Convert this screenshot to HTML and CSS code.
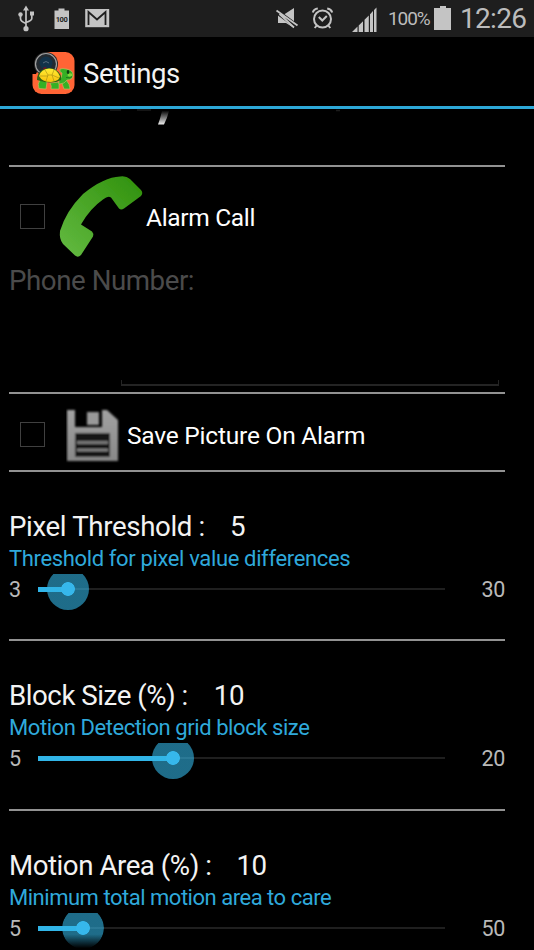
FILE: index.html
```html
<!DOCTYPE html>
<html lang="en">
<head>
<meta charset="utf-8">
<title>Settings</title>
<link rel="stylesheet" href="styles.css">
</head>
<body>
<div class="screen">
  <div class="status">
    <svg class="status-left" width="120" height="37" viewBox="0 0 120 37" fill="#c4c4c4">
      <g fill="none" stroke="#c4c4c4" stroke-width="1.7"><path d="M26 9v20M20.500 14v4.500q0 3 5.500 5M31.800 14v4.500q0 2-5.800 4"/></g>
      <path d="M26 5.500l3 5h-6zM30 11.500h4v4h-4z"/><circle cx="20.500" cy="14.500" r="2.200"/><circle cx="26" cy="28.700" r="2.600"/>
      <path d="M58.500 8.500h6v2H69V29H54.500V10.500h4z"/>
      <text x="55.700" y="22.300" class="batt-text" textLength="12">100</text>
      <path d="M85.200 9h24v18.200h-24z"/>
      <path d="M88.500 25V12l8.500 7.500 8.500-7.500V25" fill="none" stroke="#1e1e1e" stroke-width="1.800"/>
    </svg>
    <svg class="status-right" width="110" height="37" viewBox="0 0 110 37" fill="#c4c4c4">
      <path d="M8 14.500h6L24 8v20l-8-5H8z"/>
      <path d="M6 11L27 26.500" stroke="#1e1e1e" stroke-width="5"/>
      <path d="M6.500 10.500L27.500 25.500M9.500 14L24 27.500" fill="none" stroke="#c4c4c4" stroke-width="1.800"/>
      <g fill="none" stroke="#c4c4c4" stroke-width="2"><circle cx="52.500" cy="19" r="8.500"/><path d="M42.800 12.500q1-3.500 5-4M62.200 12.500q-1-3.500-5-4M46.700 25.500l-2 2.500M58.300 25.500l2 2.500M48.800 17l3.500 3.500 4.500-4.500"/></g>
      <path d="M82 32l5.500-5.500V32zM88.700 25.500l4.300-4.300V32h-4.300zM94.500 19.700l4.300-4.300V32h-4.300zM100 14.300l1.800-1.800V32H100zM101.500 12.500l1.500-1.500v21h-1.500zM104 10l2.500-2.500V32H104z"/>
    </svg>
    <span class="percent">100%</span>
    <svg class="battery" width="17" height="24" viewBox="0 0 17 24"><path d="M6 0h6v2h5v22H0V2h6z" fill="#c4c4c4"/></svg>
    <span class="clock">12:26</span>
  </div>
  <header class="bar">
    <svg class="logo" width="43" height="43" viewBox="0 0 43 43">
      <defs><linearGradient id="shell" x2="0" y2="1"><stop stop-color="#ffed35"/><stop offset="1" stop-color="#f9c10d"/></linearGradient></defs>
      <rect x=".5" y="0" width="42" height="42" rx="9" fill="#ff6435"/>
      <path d="M0 0h14L4 22H0z"/>
      <circle cx="14" cy="12" r="12" fill="#292929"/><circle cx="14" cy="12" r="10.500" fill="#232a30" stroke="#a1a1a1" stroke-width="1.200"/><circle cx="14" cy="11" r="6.500" fill="#123249"/><path d="M11 11q3-3 6 0" fill="none" stroke="#64798a" stroke-width=".8"/><circle cx="13" cy="17" r="2" fill="#68152c"/>
      <g fill="#35b025" stroke="#d0bd68" stroke-width=".6">
        <path d="M8 28q-3 4-1 8.500l7 .5 1-7zM18 31q2 3 1 6h8v-7zM30 28q0 5 2 9h6q0-5-4-9z"/>
        <path d="M27 28q3-2 3-7-3-1-2-4 3-1 6 0 7 1 7 6 0 5-6 5-2 4-8 4z"/>
      </g>
      <ellipse cx="38" cy="23" rx="2.500" ry="1.700" fill="#81d33a"/>
      <path d="M5 28q0-7 5-10 8-4 14 0 6 4 5 10-9 5-24 0z" fill="#2e6412"/>
      <path d="M7 24q2-7 10-7.500 8 0 11 8-1 4.500-9 5.500-9 0-12-6z" fill="url(#shell)"/>
      <path d="M13 18l3 5-2 6M22 18l-2 5 2 6M16 23h4M8 24h8M20 23l7 3" fill="none" stroke="#a38c14" stroke-width=".6"/>
      <ellipse cx="36" cy="20" rx="1.300" ry="2" fill="#103e12"/><path d="M34 25.500q4 1 6-1" fill="none" stroke="#126018" stroke-width=".7"/>
    </svg>
    <h1>Settings</h1>
  </header>
  <main>
    <section class="previous">
      <svg width="360" height="17" viewBox="0 0 360 17">
        <defs><linearGradient id="fade" x2="0" y2="1"><stop stop-color="#080808"/><stop offset="1" stop-color="#eee"/></linearGradient></defs>
        <path d="M153 2h7q-2 8-5 13.500h-6q2-5 4-13.500z" fill="url(#fade)"/>
        <path d="M101 1h11M128 1h14M327 1.500h4" stroke="#1c1c1c" stroke-width="1.500"/>
      </svg>
    </section>
    <section class="call">
      <label class="option">
        <span class="check"></span>
        <svg class="phone" width="86" height="84" viewBox="0 0 86 84">
          <defs><linearGradient id="green" x1="1" y1="0" x2="0" y2="1"><stop stop-color="#2f900b"/><stop offset="1" stop-color="#64bb42"/></linearGradient><filter id="edge"><feGaussianBlur stdDeviation=".4"/></filter></defs>
          <path filter="url(#edge)" d="M61 1.500q6-1 10 2.500l11 11q2.500 3 0 6L65 33.500q-3 2-5 0l-8-11q-3-2-8 2-13 9-22 25l11 7q2 2 1 5L22 80q-3 3-6 .5L4 69q-4-5-3-13Q7 36 24 19 45 2 61 1.500z" fill="url(#green)"/>
        </svg>
        <span>Alarm Call</span>
      </label>
      <div class="phone-label">Phone Number:</div>
      <div class="field"></div>
    </section>
    <section class="save">
      <label class="option">
        <span class="check"></span>
        <svg class="disk" width="56" height="56" viewBox="0 0 56 56">
          <defs><linearGradient id="grey" x2="0" y2="1"><stop stop-color="#a2a2a2"/><stop offset="1" stop-color="#888"/></linearGradient><filter id="soft" x="-10%" y="-10%" width="120%" height="120%"><feGaussianBlur stdDeviation=".8"/></filter></defs>
          <g filter="url(#soft)">
            <path d="M1 3h8v17h27V3h5l11 10v41H1z" fill="url(#grey)"/>
            <path d="M21 5h12v13H21z" fill="#999"/>
            <path d="M9 26h35v24H9z" fill="#151515"/>
            <path d="M11 35.500h31M11 43h31" stroke="#888" stroke-width="2.500"/>
          </g>
        </svg>
        <span>Save Picture On Alarm</span>
      </label>
    </section>
    <section class="setting">
      <div class="name n1"><span>Pixel Threshold :</span><span>5</span></div>
      <div class="hint h1">Threshold for pixel value differences</div>
      <div class="range"><span>3</span><div class="track"><div class="fill" style="width:30px"><i></i></div></div><span>30</span></div>
    </section>
    <section class="setting">
      <div class="name n2"><span>Block Size (%) :</span><span>10</span></div>
      <div class="hint h2">Motion Detection grid block size</div>
      <div class="range"><span>5</span><div class="track"><div class="fill" style="width:135px"><i></i></div></div><span>20</span></div>
    </section>
    <section class="setting last">
      <div class="name n3"><span>Motion Area (%) :</span><span>10</span></div>
      <div class="hint h3">Minimum total motion area to care</div>
      <div class="range"><span>5</span><div class="track"><div class="fill" style="width:45px"><i></i></div></div><span>50</span></div>
    </section>
  </main>
</div>
</body>
</html>
```
FILE: styles.css
```css
* { box-sizing: border-box; }
body { margin: 0; background: #000; color: #f3f3f3; font-family: Roboto, sans-serif; }
svg { display: block; flex: none; }
.screen { width: 534px; height: 950px; overflow: hidden; display: flex; flex-direction: column; background: #000; }
.status { height: 37px; flex: none; display: flex; background: #1e1e1e; color: #bcbcbc; white-space: nowrap; }
.status-left { margin-right: 150px; }
.batt-text { font: 700 7.5px Roboto, sans-serif; fill: #1e1e1e; }
.percent { font-size: 19px; line-height: 38px; margin-left: 8px; width: 42px; letter-spacing: -1.1px; }
.battery { margin: 6px 0 0 4px; }
.clock { font-size: 28px; line-height: 37px; margin-left: 9px; letter-spacing: -.7px; }
.bar { height: 72px; flex: none; display: flex; padding: 15px 0 0 32px; border-bottom: 3px solid #2da8d8; }
h1 { margin: 0 0 0 8px; font-size: 27.5px; font-weight: 400; line-height: 44px; letter-spacing: -.45px; }
main { width: 496px; margin-left: 9px; flex: 1; min-height: 0; }
section { border-bottom: 2px solid #929292; }
.previous { height: 58px; }
.call { height: 227px; }
.save { height: 78px; }
.option { display: flex; align-items: center; color: #fff; font-size: 24.5px; letter-spacing: -.22px; white-space: nowrap; }
.call .option { height: 100px; letter-spacing: -.33px; }
.save .option { height: 82px; }
.check { width: 25px; height: 25px; border: 1px solid #404040; margin-left: 11px; flex: none; }
.call .check, .save .check { margin-bottom: 1px; }
.phone { margin: 0 1.500px 0 13.500px; }
.disk { margin: 0 5px 0 21px; }
.phone-label { font-size: 27.7px; line-height: 32px; color: #4b4b4b; letter-spacing: -.45px; margin-top: -2px; }
.field { height: 6px; width: 378px; margin: 83px 0 0 112px; border: solid #242424; border-width: 0 1px 2px; }
.setting { height: 169.400px; padding-top: 38px; }
.name { display: flex; gap: 25px; font-size: 27.7px; line-height: 33px; white-space: nowrap; letter-spacing: -.47px; }
.n1 { letter-spacing: -.37px; }
.n2 { gap: 26px; }
.hint { font-size: 22px; line-height: 31px; color: #2fa9db; white-space: nowrap; letter-spacing: -.43px; }
.h1 { letter-spacing: -.36px; }
.h3 { letter-spacing: -.48px; }
.range { height: 36px; display: flex; align-items: flex-start; font-size: 21.5px; line-height: 31px; color: #b9b9b9; letter-spacing: -.3px; }
.range > span { width: 29px; flex: none; }
.range > span:last-child { width: 60px; text-align: right; }
.track { width: 407px; height: 36px; overflow: hidden; background: linear-gradient(#1f1f1f, #1f1f1f) 0 14px / 100% 2px no-repeat; }
.fill { height: 36px; display: flex; justify-content: flex-end; background: linear-gradient(#31b5e8, #31b5e8) 0 13px / 100% 5px no-repeat; }
.fill i { width: 42px; height: 42px; flex: none; margin: -6px -21px 0 0; border-radius: 50%; background: radial-gradient(circle, #36b7eb 0 6.500px, rgba(51, 181, 229, .6) 7.200px); }
.last { border-bottom: 0; }
.last .fill i { -webkit-mask-image: linear-gradient(#000 65%, transparent 98%); mask-image: linear-gradient(#000 65%, transparent 98%); }
```
